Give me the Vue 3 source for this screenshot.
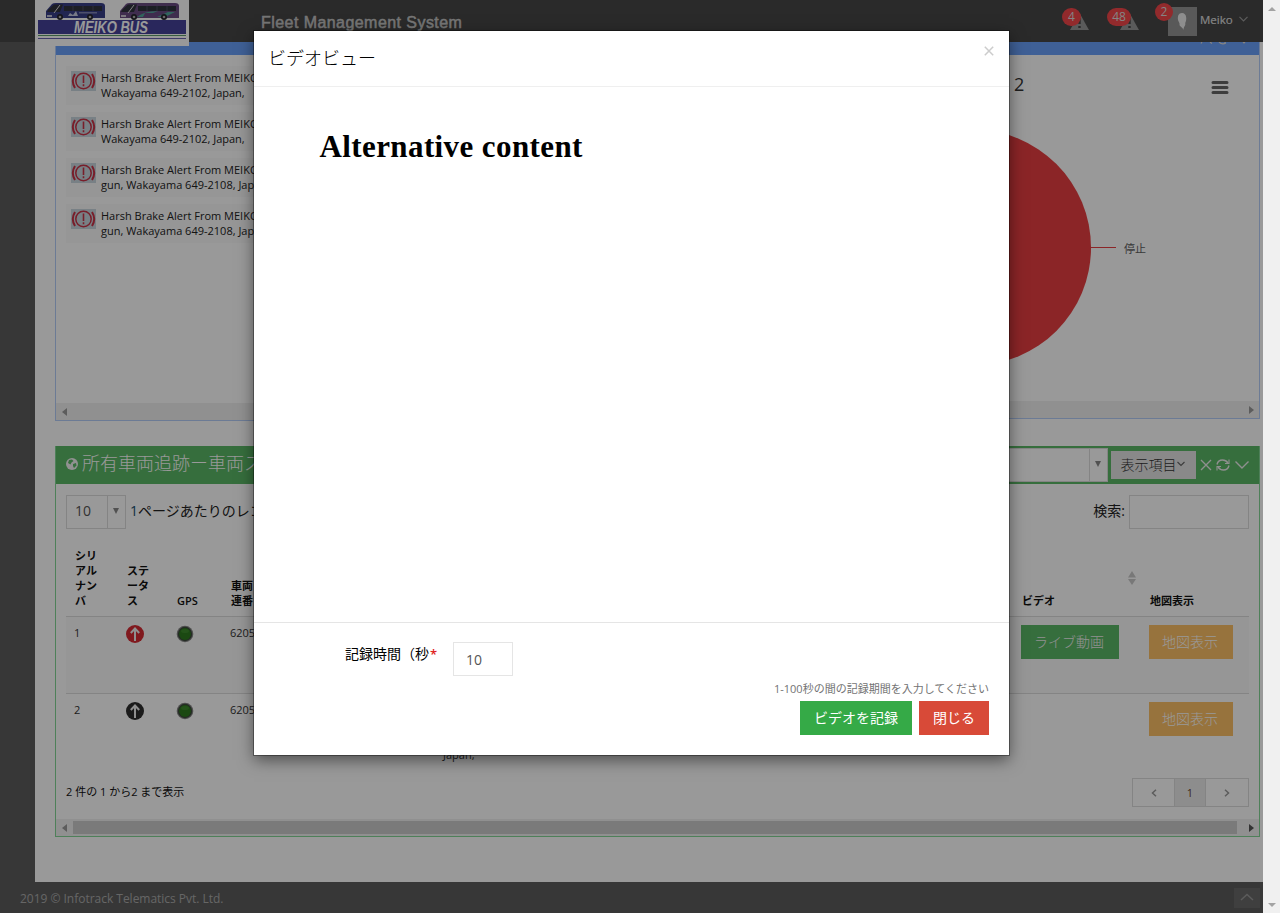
<script setup>
const alerts = [
  ['Harsh Brake Alert From MEIKO BUS', 'Wakayama 649-2102, Japan,'],
  ['Harsh Brake Alert From MEIKO BUS', 'Wakayama 649-2102, Japan,'],
  ['Harsh Brake Alert From MEIKO BUS', 'gun, Wakayama 649-2108, Japan,'],
  ['Harsh Brake Alert From MEIKO BUS', 'gun, Wakayama 649-2108, Japan,'],
]
const rows = [
  { n: '1', color: '#d62a33', live: true },
  { n: '2', color: '#2d2d2d', live: false, address: 'Japan,' },
]
</script>

<template>
  <div class="screen">
    <div class="page">
      <header class="topbar">
        <div class="logo">
          <svg width="154" height="46" viewBox="0 0 154 46">
            <rect width="154" height="46" fill="#fff" />
            <g v-for="(x, i) in [10, 84]" :key="x" :transform="`translate(${x} 3)`">
              <path d="M1 8 L7 1 Q8 0 11 0 H56 Q60 0 60 3 V15 H1 Z" :fill="i ? '#694b82' : '#383f88'" />
              <path d="M5 5 L9 1.5 H18 L15 9 H2 L3 7 Z M19 3 H57 V8 H19 Z" fill="#30323e" />
              <path d="M9 10 L15 2" stroke="#ddd" stroke-width="1" />
              <path d="M28 3 V8 M38 3 V8 M48 3 V8" stroke="#4a4d62" stroke-width="1" />
              <path v-if="i" d="M18 14 Q25 8 39 8 L34 10 H26 L24 14 Z M38 14 L49 9 H56 L46 14 Z" fill="#51a99c" />
              <path v-else d="M23 13 L25 10 L28 12 L31 8 L33 13 Z M34 9.500 H52 V10.200 H34 Z" fill="#c7cbe0" />
              <path d="M2 13 H7" stroke="#eee" stroke-width="1.5" />
              <circle cx="15" cy="14" r="3" fill="#24242a" /><circle cx="15" cy="14" r="1.3" fill="#aaa" />
              <circle cx="45" cy="14" r="3" fill="#24242a" /><circle cx="45" cy="14" r="1.3" fill="#aaa" />
            </g>
            <rect x="3" y="20" width="148" height="14" fill="#45429a" />
            <text x="39" y="33" class="brand" textLength="74" lengthAdjust="spacingAndGlyphs">MEIKO BUS</text>
            <path d="M3 35.5 H151" stroke="#5d9c6c" />
            <path d="M3 38.5 H151" stroke="#6a60b0" />
          </svg>
        </div>
        <div class="system">Fleet Management System</div>
        <div class="tools">
          <div class="alert a1"><svg width="19" height="17" viewBox="0 0 19 17"><path d="M9.5 0 L19 17 H0 Z" fill="#969696" /><path d="M9.5 5 V11 M9.5 13 V15" stroke="#464646" stroke-width="2.4" /></svg><b>4</b></div>
          <div class="alert a2"><svg width="19" height="17" viewBox="0 0 19 17"><path d="M9.5 0 L19 17 H0 Z" fill="#969696" /><path d="M9.5 5 V11 M9.5 13 V15" stroke="#464646" stroke-width="2.4" /></svg><b>48</b></div>
          <div class="avatar">
            <svg width="29" height="29" viewBox="0 0 29 29"><rect width="29" height="29" fill="#949494" /><path d="M14 6 C10.500 6 9.500 9 10 13 C10.500 15 12 16 11.500 18 C12.500 20 14.500 20 15.500 23 C15.500 19 18 19 17.200 16 C19 13 19 6 14 6Z" fill="#ededed" /></svg>
            <b>2</b>
          </div>
          <span class="user">Meiko</span>
          <svg class="caret" width="9" height="6" viewBox="0 0 9 6"><path d="M.5 .8 L4.500 4.800 L8.500 .8" fill="none" stroke="#999" stroke-width="1.200" /></svg>
        </div>
      </header>

      <div class="body">
        <main class="content">
          <div class="upper">
            <section class="panel alerts">
              <div class="strip"></div>
              <div class="list">
                <div v-for="(a, i) in alerts" :key="i" class="item">
                  <svg width="25" height="20" viewBox="0 0 25 20">
                    <rect width="25" height="20" fill="#c9d6de" />
                    <g fill="none" stroke="#c83246">
                      <circle cx="12.500" cy="10" r="7.700" stroke-width="1.500" />
                      <path d="M4 3 Q-.4 10 4 17 M21 3 Q25.400 10 21 17" stroke-width="2" />
                      <path d="M12.500 4.500 V12 M12.500 13.300 V15.300" stroke-width="1.600" />
                    </g>
                  </svg>
                  <div>{{ a[0] }}<br>{{ a[1] }}</div>
                </div>
              </div>
              <div class="hbar"><i class="tri left"></i></div>
            </section>
            <section class="panel chart">
              <div class="strip">
                <svg width="60" height="4" viewBox="0 0 60 4"><path d="M2 0 L1 1.500 M10 0 L12 1.500 M19 0 Q22 3 26 1 M25 0 V2 M43 0 L44 1 L45 0" stroke="#ddd" fill="none" stroke-width="1.200" /></svg>
              </div>
              <div class="plot">
                <svg width="418" height="346" viewBox="1 0 418 346">
                  <circle cx="133" cy="192.500" r="118" fill="#e83f41" />
                  <path d="M251 192.500 H276" stroke="#e83f41" />
                  <text x="284" y="197.500" class="slice">停止</text>
                  <text x="174" y="36" class="title">2</text>
                  <path d="M373 27.500 H387 M373 32.500 H387 M373 37.500 H387" stroke="#666" stroke-width="3" stroke-linecap="round" />
                </svg>
              </div>
              <div class="hbar"><i class="tri right"></i></div>
            </section>
          </div>

          <section class="track">
            <div class="bar">
              <svg class="globe" width="12" height="12" viewBox="0 0 12 12"><circle cx="6" cy="6" r="6" fill="#f2f2f2" /><path d="M3 2 L6 1.500 L7.500 3 L5.500 4.500 L4.500 6.500 L2 5 Z M7 6 L10 5 L10.500 7.500 L8 10 L7 8 Z" fill="#5ab766" /></svg>
              <h2>所有車両追跡ー車両ステータス</h2>
              <div class="combo"><span><i class="tri down"></i></span></div>
              <button class="cols">表示項目<svg width="8" height="6" viewBox="0 0 8 6"><path d="M.5 1 L4 4.500 L7.500 1" fill="none" stroke="#666" stroke-width="1.200" /></svg></button>
              <svg class="acts" width="50" height="14" viewBox="0 0 50 14">
                <g fill="none" stroke="#eee" stroke-width="1.400">
                  <path d="M1 2 L11 12 M11 2 L1 12" />
                  <path d="M17 6.500 Q18 2 22.500 2 Q26 2 28 5 M29 7.500 Q28 12 23.500 12 Q20 12 18 9" />
                  <path d="M29 1.500 V5.500 H25 M17 12.500 V8.500 H21" stroke-width="1.100" />
                  <path d="M35.500 3.500 L42 10 L48.500 3.500" />
                </g>
              </svg>
            </div>
            <div class="filters">
              <div class="size">10<span><i class="tri down"></i></span></div>
              <label><em>1</em>ページあたりのレコード</label>
              <label class="search">検索:</label>
              <div class="box"></div>
            </div>
            <div class="grid head">
              <div>シリ<br>アル<br>ナン<br>バ</div>
              <div>ステ<br>ータ<br>ス</div>
              <div>GPS</div>
              <div>車両<br>連番</div>
              <div></div>
              <div class="video">ビデオ<svg width="8" height="14" viewBox="0 0 8 14"><path d="M4 0 L8 6.500 H0 Z M0 8 H8 L4 14 Z" fill="#c9c9c9" /></svg></div>
              <div class="last">地図表示</div>
            </div>
            <div v-for="r in rows" :key="r.n" class="grid row">
              <div>{{ r.n }}</div>
              <div class="ico"><svg width="18" height="18" viewBox="0 0 18 18"><circle cx="9" cy="9" r="9" :fill="r.color" /><path d="M9 16 V4 M4.800 8 L9 3.500 L13.200 8" fill="none" stroke="#eee" stroke-width="2" /></svg></div>
              <div class="ico"><svg width="18" height="18" viewBox="0 0 18 18"><circle cx="9" cy="9" r="8.300" fill="#858585" /><circle cx="9" cy="9" r="7.200" fill="#3c4a3c" /><circle cx="9" cy="9" r="5.900" fill="#2e7a1e" /><ellipse cx="9" cy="6" rx="4" ry="2" fill="#3c8a2c" /></svg></div>
              <div>6205</div>
              <div class="addr">{{ r.address }}</div>
              <div class="act"><button v-if="r.live" class="live">ライブ動画</button></div>
              <div class="act"><button class="map">地図表示</button></div>
            </div>
            <div class="pager">
              <span>2 件の 1 から2 まで表示</span>
              <div class="pages">
                <i><svg width="6" height="8" viewBox="0 0 6 8"><path d="M5 .8 L1.500 4 L5 7.200" fill="none" stroke="#999" stroke-width="1.500" /></svg></i>
                <i class="cur">1</i>
                <i><svg width="6" height="8" viewBox="0 0 6 8"><path d="M1 .8 L4.500 4 L1 7.200" fill="none" stroke="#999" stroke-width="1.500" /></svg></i>
              </div>
            </div>
            <div class="hbar full"><i class="tri left"></i><div class="thumb"></div><i class="tri right dark"></i></div>
          </section>
        </main>
      </div>
      <footer>
        <span>2019 © Infotrack Telematics Pvt. Ltd.</span>
        <div class="totop"><svg width="14" height="8" viewBox="0 0 14 8"><path d="M1 7 L7 1.500 L13 7" fill="none" stroke="#999" stroke-width="1.500" /></svg></div>
      </footer>
      <div class="shade"></div>
    </div>

    <div class="scroll"><i class="tri up"></i><i class="tri down"></i></div>

    <div class="modal">
      <div class="mhead"><h3>ビデオビュー</h3>
        <svg width="10" height="10" viewBox="0 0 10 10"><path d="M.8 .8 L9.200 9.200 M9.200 .8 L.8 9.200" stroke="#ccc" stroke-width="1.500" /></svg>
      </div>
      <div class="mbody"><h1>Alternative content</h1></div>
      <div class="mfoot">
        <div class="field"><label>記録時間（秒<b>*</b></label><div class="num">10</div></div>
        <p>1-100秒の間の記録期間を入力してください</p>
        <div class="btns"><button class="rec">ビデオを記録</button><button class="close">閉じる</button></div>
      </div>
    </div>
  </div>
</template>

<style>
html, body { margin: 0; overflow: hidden; }
</style>
<style scoped>
* { box-sizing: border-box; }
.screen { position: relative; width: 1280px; height: 913px; display: flex; overflow: hidden; font-family: "Open Sans", "Noto Sans CJK JP", sans-serif; font-size: 11px; color: #111; }
.page { position: relative; width: 1263px; height: 913px; background: #5d5d5d; display: flex; flex-direction: column; }
.shade { position: absolute; inset: 0; background: rgba(0, 0, 0, .4); z-index: 5; }
button { border: 0; padding: 0; font-family: inherit; white-space: nowrap; }
.topbar { height: 42px; background: #464646; display: flex; flex: none; position: relative; z-index: 2; }
.logo { margin-left: 35px; width: 154px; height: 46px; }
.logo svg { display: block; }
.brand { font: italic bold 16px "Liberation Sans"; fill: #fff; }
.system { margin: 12px 0 0 72px; font: 16px/21px "Liberation Sans", sans-serif; letter-spacing: .44px; -webkit-text-stroke: .5px #c4c4c4; color: #c4c4c4; white-space: nowrap; }
.tools { margin-left: auto; width: 201px; position: relative; display: flex; height: 42px; }
.alert, .avatar { position: relative; }
.alert b, .avatar b { position: absolute; background: #f4464a; color: #ddd; font-weight: 400; font-size: 12px; line-height: 18px; border-radius: 9px; text-align: center; height: 18px; }
.alert { padding-top: 13px; width: 19px; }
.a1 { margin-left: 8px; }
.a1 b { left: -8px; top: 8px; width: 19px; }
.a2 { margin-left: 31px; }
.a2 b { left: -13px; top: 8px; width: 24px; }
.avatar { padding-top: 7px; margin-left: 29px; width: 29px; }
.avatar b { left: -13px; top: 3px; width: 18px; }
.user { margin: 12px 0 0 3px; line-height: 16px; font-size: 11.5px; color: #ddd; width: 31px; -webkit-text-stroke: .2px #ddd; }
.caret { margin: 16px 0 0 8px; }
.body { height: 840px; padding-left: 35px; display: flex; flex: none; }
.content { flex: 1; background: #fff; padding: 0 3px 0 20px; }
.upper { display: flex; height: 404px; align-items: flex-start; }
.panel { border: 1px solid #b4cef8; border-top: 0; background: #fff; display: flex; flex-direction: column; }
.strip { height: 13px; background: #69a0fb; flex: none; }
.alerts { width: 595px; height: 379px; }
.list { padding: 11px 10px 0; flex: 1; }
.item { height: 39px; margin-bottom: 7px; padding: 5px; background: #fafafa; display: flex; line-height: 15px; white-space: nowrap; color: #222; }
.item svg { margin-right: 5px; }
.item div { margin-top: -1px; }
.chart { width: 420px; height: 377px; margin-left: auto; }
.strip svg { display: block; margin-left: 359px; }
.plot { height: 346px; }
.plot svg { display: block; }
.slice { font-size: 11px; fill: #606060; }
.title { font-size: 18px; fill: #333; }
.hbar { height: 17px; background: #f1f1f1; display: flex; align-items: center; flex: none; }
.tri { width: 0; height: 0; border: 4px solid transparent; flex: none; display: block; }
.tri.left { border-right-color: #999; border-left: 0; border-right-width: 5px; margin-left: 6px; }
.tri.right { border-left-color: #999; border-right: 0; border-left-width: 5px; margin-left: auto; margin-right: 5px; }
.tri.right.dark { border-left-color: #555; }
.tri.down { border-top-color: #888; border-bottom: 0; border-top-width: 6px; border-left-width: 3px; border-right-width: 3px; }
.track { width: 1205px; height: 391px; border: 1px solid #83d694; border-top: 0; display: flex; flex-direction: column; }
.bar { height: 38px; background: #5ab766; display: flex; align-items: flex-start; padding-left: 10px; flex: none; }
.globe { margin: 12px 4px 0 0; flex: none; }
h2 { margin: 3px 0 0; font-weight: 300; font-size: 18px; line-height: 28px; color: #fff; white-space: nowrap; }
.combo { margin: 2px 3px 0 auto; width: 200px; height: 34px; border: 1px solid #ddd; background: #fff; display: flex; justify-content: flex-end; }
.combo span, .size span { width: 18px; border-left: 1px solid #ddd; display: flex; justify-content: center; padding: 12px 1px 0 0; }
.cols { margin-top: 5px; width: 85px; height: 28px; background: #e5e5e5; color: #333; font-size: 14px; font-weight: 300; display: flex; align-items: center; justify-content: center; padding: 0 2px 2px 0; }
.acts { margin: 12px 9px 0 4px; }
.filters { display: flex; padding: 11px 10px 0; height: 54px; flex: none; font-size: 14px; font-weight: 300; }
.size { width: 60px; height: 34px; border: 1px solid #ddd; padding-left: 8px; line-height: 30px; display: flex; justify-content: space-between; color: #555; font-weight: 400; }
.filters label { line-height: 31px; margin-left: 4px; font-weight: 400; color: #222; }
em { font-style: normal; color: #175070; }
.filters .search { margin-left: auto; }
.box { width: 120px; height: 34px; border: 1px solid #ddd; margin-left: 4px; }
.grid { display: grid; grid-template-columns: 52px 50px 54px 211px 580px 127px 109px; margin: 0 10px; }
.head { height: 79px; align-items: end; font-weight: 600; line-height: 15px; padding-bottom: 8px; border-bottom: 1px solid #ddd; flex: none; }
.head > div { padding-left: 9px; }
.head > .last { padding-left: 10px; }
.head > .video { display: flex; justify-content: space-between; height: 37px; align-items: flex-end; padding-right: 4px; }
.video svg { align-self: flex-start; }
.row { height: 77px; background: #fafafa; border-bottom: 1px solid #ddd; line-height: 15px; padding-top: 8px; flex: none; color: #333; }
.row > div { padding-left: 8px; }
.row + .row { background: #fff; border-bottom: 0; }
.row .addr { padding: 45px 0 0 10px; }
.act button { height: 34px; color: #f2f2f2; font-size: 14px; font-weight: 300; display: block; padding: 0 2px 2px 0; }
.live { width: 98px; background: #5ab766; }
.act .map { width: 84px; background: #fcc067; margin-left: 1px; color: #fff; }
.row .ico { padding-left: 7.5px; }
.pager { display: flex; justify-content: space-between; padding: 7px 10px 0; height: 48px; line-height: 27px; flex: none; }
.pages { display: flex; width: 117px; height: 29px; border: 1px solid #ddd; }
.pages i { font-style: normal; display: flex; align-items: center; justify-content: center; flex: 1; color: #333; }
.pages i:first-child { flex: 0 0 41px; }
.pages i.cur { flex: 0 0 32px; border: solid #ddd; border-width: 0 1px; background: #ececec; color: #6a4530; }
.full .thumb { width: 1164px; height: 13px; background: #cbcbcb; margin-left: 6px; }
footer { flex: 1; display: flex; justify-content: space-between; padding: 6px 3px 0 20px; color: #aaa; font-size: 12px; line-height: 21px; letter-spacing: -.02px; }
.totop { width: 26px; height: 20px; background: #6a6a6a; display: flex; justify-content: center; padding-top: 5px; }
.scroll { width: 17px; background: #f0f0f0; display: flex; flex-direction: column; justify-content: space-between; align-items: center; padding: 7px 0 6px; }
.scroll .tri.up { border-bottom-color: #a3a3a3; border-top: 0; }
.scroll .tri.down { border: 4px solid transparent; border-top-color: #a3a3a3; border-bottom: 0; }
.modal { position: absolute; z-index: 10; left: 254px; top: 31px; width: 755px; height: 724px; background: #fff; box-shadow: 0 0 0 1px rgba(0, 0, 0, .35), 0 5px 15px rgba(0, 0, 0, .5); display: flex; flex-direction: column; color: #000; }
.mhead { height: 56px; border-bottom: 1px solid #efefef; display: flex; justify-content: space-between; padding: 15px 15px 0 14px; }
h3 { margin: 0; font-size: 18px; font-weight: 300; line-height: 25px; }
.mbody { height: 535px; padding: 42px 65.5px 0; }
h1 { margin: 0; font: bold 31px/35px "Liberation Serif", serif; letter-spacing: .4px; white-space: nowrap; }
.mfoot { border-top: 1px solid #e5e5e5; padding: 19px 20px 0; flex: 1; }
.field { display: flex; font-size: 14px; height: 34px; padding-left: 71px; }
.field label { width: 108px; line-height: 24px; white-space: nowrap; }
.field b { color: #e02222; font-weight: 600; font-size: 13px; margin-left: 1px; }
.num { width: 60px; height: 34px; border: 1px solid #e5e5e5; padding-left: 12px; line-height: 33px; color: #555; }
.mfoot p { margin: 5px 0 4px; text-align: right; line-height: 16px; font-size: 11px; color: #737373; }
.btns { display: flex; justify-content: flex-end; gap: 7px; }
.btns button { height: 34px; color: #fff; font-size: 14px; padding: 0 0 2px; }
.rec { width: 112px; background: #35aa47; }
.close { width: 70px; background: #d84a38; }
</style>
